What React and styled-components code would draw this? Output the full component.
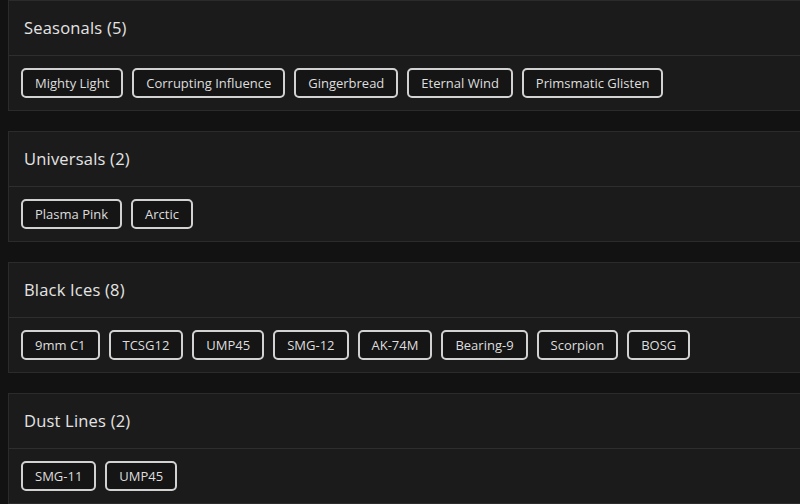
import React from 'react';
import styled, { createGlobalStyle } from 'styled-components';

const groups = [
  { title: 'Seasonals', items: ['Mighty Light', 'Corrupting Influence', 'Gingerbread', 'Eternal Wind', 'Primsmatic Glisten'] },
  { title: 'Universals', items: ['Plasma Pink', 'Arctic'] },
  { title: 'Black Ices', items: ['9mm C1', 'TCSG12', 'UMP45', 'SMG-12', 'AK-74M', 'Bearing-9', 'Scorpion', 'BOSG'] },
  { title: 'Dust Lines', items: ['SMG-11', 'UMP45'] },
];

const App = () => (
  <>
    <GlobalStyle />
    <Page>
      {groups.map(group => (
        <Card key={group.title}>
          <CardHeader>
            <Title>{group.title} ({group.items.length})</Title>
          </CardHeader>
          <ChipRow>
            {group.items.map(item => (
              <Chip key={item}>{item}</Chip>
            ))}
          </ChipRow>
        </Card>
      ))}
    </Page>
  </>
);

export default App;

const GlobalStyle = createGlobalStyle`
  html, body {
    margin: 0;
    padding: 0;
    background: #121212;
    overflow: hidden;
  }
  body {
    font-family: "Open Sans", "Noto Sans", sans-serif;
    color: #e6e6e6;
  }
`;

const Page = styled.div`
  display: flex;
  flex-direction: column;
  gap: 20px;
  padding-left: 8px;
  margin-right: -20px;
`;

const Card = styled.div`
  background: #1b1b1b;
  border: 1px solid #2b2b2b;
`;

const CardHeader = styled.div`
  height: 54px;
  display: flex;
  align-items: center;
  padding-left: 15px;
  border-bottom: 1px solid #2e2e2e;
`;

const Title = styled.div`
  font-size: 16.5px;
  line-height: 20px;
  font-weight: 500;
  color: #e4e4e4;
  letter-spacing: 0.2px;
`;

const ChipRow = styled.div`
  display: flex;
  flex-wrap: wrap;
  gap: 9px;
  padding: 12px;
`;

const Chip = styled.div`
  height: 30px;
  box-sizing: border-box;
  display: flex;
  align-items: center;
  padding: 0 12px;
  border: 2px solid #d2d2d2;
  border-radius: 5px;
  background: #151515;
  color: #dedede;
  font-size: 13px;
`;
